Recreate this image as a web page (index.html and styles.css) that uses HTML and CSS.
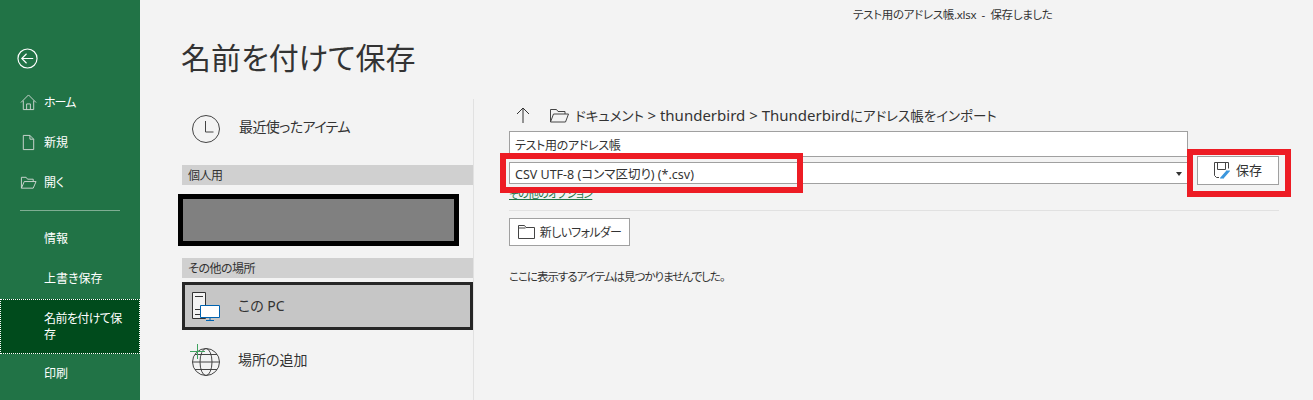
FILE: index.html
```html
<!doctype html>
<html lang="ja">
<head>
	<meta charset="UTF-8">
	<title>名前を付けて保存</title>
	<link rel="stylesheet" href="styles.css">
</head>
<body>
	<div class="side">
		<div class="back">
			<svg width="21" height="21" viewBox="0 0 22 22" fill="none" stroke="#fff" stroke-width="1.2"><circle cx="11" cy="11" r="10"/><path d="M17 11H5M10 6l-5 5 5 5"/></svg>
		</div>
		<div class="item">
			<svg class="ico" width="17" height="17" viewBox="0 0 18 18" fill="none" stroke="#d0d8d3" stroke-width="1"><path d="M1 9l8-8 8 8M3.500 7v9.500h11V7M7 16.500V10.500h4v6"/></svg>
			<span class="home">ホーム</span>
		</div>
		<div class="item">
			<svg class="ico" width="17" height="17" viewBox="0 0 18 18" fill="none" stroke="#d0d8d3" stroke-width="1"><path d="M3.500 1.500h7l4 4v11h-11zM10.500 1.500v4h4"/></svg>
			<span>新規</span>
		</div>
		<div class="item">
			<svg class="ico" width="17" height="17" viewBox="0 0 18 18" fill="none" stroke="#d0d8d3" stroke-width="1"><path d="M1.500 15V3.500h5l1.500 2h6V8M1.500 15l3-7h12.500l-3 7z"/></svg>
			<span>開く</span>
		</div>
		<div class="rule"></div>
		<div class="item"><span>情報</span></div>
		<div class="item"><span>上書き保存</span></div>
		<div class="item on"><span>名前を付けて保存</span></div>
		<div class="item"><span>印刷</span></div>
	</div>

	<div class="main">
		<div class="titlebar">テスト用のアドレス帳.xlsx&nbsp; -&nbsp; 保存しました</div>
		<h1>名前を付けて保存</h1>
		<div class="cols">
			<div class="places">
				<div class="place recent">
					<svg width="28" height="28" viewBox="0 0 28 28" fill="none" stroke="#444" stroke-width="1"><circle cx="14" cy="14" r="13.500"/><path d="M13.500 6v11h8"/></svg>
					<span>最近使ったアイテム</span>
				</div>
				<div class="head">個人用</div>
				<div class="mask"></div>
				<div class="head">その他の場所</div>
				<div class="place pc">
					<svg width="28" height="29" viewBox="0 0 28 29" fill="none">
						<path d="M.5 .5h13v26h-13z" fill="#f3f3f3" stroke="#333"/>
						<path d="M3 4.500h8M3 17.500h5M3 22.500h5" stroke="#333"/>
						<path d="M8.500 13.500h19v12h-19z" fill="#fff" stroke="#0063b1"/>
						<path d="M18 26v2M14 28.500h8" stroke="#0063b1"/>
					</svg>
					<span>この PC</span>
				</div>
				<div class="place add">
					<svg width="32" height="32" viewBox="0 0 32 32" fill="none" stroke="#444">
						<circle cx="17" cy="18" r="13.500"/>
						<ellipse cx="17" cy="18" rx="6" ry="13.500"/>
						<path d="M3.500 18h27M6 10.500h22M6 25.500h22"/>
						<path d="M8.500 0v15M1 7.500h15" stroke="#3fa35f"/>
					</svg>
					<span>場所の追加</span>
				</div>
			</div>

			<div class="pane">
				<div class="crumbs">
					<svg width="14" height="18" viewBox="0 0 14 18" fill="none" stroke="#333"><path d="M7 17V2M1 8l6-6 6 6"/></svg>
					<svg class="folder" width="19" height="15" viewBox="0 0 19 15" fill="none" stroke="#444"><path d="M.5 14V1.500h6l1.500 2h7V6M.5 14l3-8h15l-3 8z"/></svg>
					<span>ドキュメント <b>&gt; thunderbird &gt; Thunderbird</b>にアドレス帳をインポート</span>
				</div>
				<div class="fields">
					<div class="field name">テスト用のアドレス帳</div>
					<div class="filerow">
						<div class="field type">CSV UTF-8 (コンマ区切り) (*.csv)<i class="caret"></i></div>
						<div class="btn save">
							<svg width="17" height="17" viewBox="0 0 17 17" fill="none">
								<path d="M5 15.500H2.500l-2-2V.5h14v6M3.500 .5v7h8v-7" stroke="#444"/>
								<path d="M6.500 16.500l7-8M8.500 16.500l7-8" stroke="#3a96dd" stroke-width="1.500"/>
							</svg>
							保存
						</div>
						<div class="mark mark-save"></div>
					</div>
					<div class="mark mark-type"></div>
				</div>
				<a class="more">その他のオプション</a>
				<div class="sep"></div>
				<div class="btn newfolder">
					<svg width="17" height="14" viewBox="0 0 17 14" fill="none" stroke="#444"><path d="M.5 13.500V.5h6l1.500 2h8.500v11z"/><path d="M.5 3h7"/></svg>
					<span>新しいフォルダー</span>
				</div>
				<p class="empty">ここに表示するアイテムは見つかりませんでした。</p>
			</div>
		</div>
	</div>
</body>
</html>
```

FILE: styles.css
```css
*{margin:0;padding:0;box-sizing:border-box;}
html,body{height:400px;overflow:hidden;}
body{
	display:flex;
	background:#f3f3f3;
	color:#333;
	font-family:"Noto Sans","Noto Sans CJK JP",sans-serif;
	font-feature-settings:"palt";
}

/* left green bar */
.side{
	width:140px;
	flex:none;
	padding-top:36px;
	background:#217346;
	color:#fff;
	font-size:12px;
}
.back{height:47px;padding:12px 0 0 17px;}
.back svg{display:block;}
.item{
	display:flex;
	align-items:center;
	min-height:40px;
	padding:0 16px 0 44px;
	position:relative;
	line-height:16px;
}
.item .ico{position:absolute;left:20px;top:11px;}
.item .home{letter-spacing:-1px;}
.item.on{
	min-height:55px;
	background:#004b1c;
	outline:1px dotted #fff;
	outline-offset:-1px;
}
.item.on span{letter-spacing:-.6px;}
.rule{height:1px;margin:7px 20px 8px;background:#7fae93;}

.main{flex:1;min-width:0;}
.titlebar{
	height:30px;
	padding:7px 0 0 713px;
	font-size:11.500px;
	letter-spacing:-.3px;
	line-height:16px;
	white-space:nowrap;
}
h1{
	height:69px;
	padding:8px 0 0 41px;
	font-size:30px;
	font-weight:400;
	line-height:40px;
}
.cols{display:flex;}

/* place list */
.places{
	width:334px;
	height:301px;
	padding-left:42px;
	border-right:1px solid #e1e1e1;
}
.place{
	display:flex;
	align-items:center;
	font-size:14px;
}
.recent{height:66px;padding:0 0 6px 10px;gap:19px;}
.recent span{margin-bottom:6px;letter-spacing:-.6px;}
.head{
	height:20px;
	padding-left:6px;
	background:#d0d0d0;
	font-size:12px;
	letter-spacing:-.5px;
	line-height:21px;
}
.mask{
	width:281px;
	height:52px;
	margin:9px 0 12px -4px;
	background:#808080;
	border:5px solid #000;
}
.pc{
	height:48px;
	margin-top:4px;
	padding-left:7px;
	gap:18px;
	background:#c6c6c6;
	border:3px solid #262626;
}
.pc span{margin-bottom:3px;}
.add{height:60px;padding-left:7px;gap:17px;}
.add span{margin-bottom:2px;}

/* right pane */
.pane{flex:1;padding:0 34px 0 35px;}
.crumbs{
	display:flex;
	align-items:center;
	height:32px;
	font-size:13.500px;
	margin-left:7px;
	white-space:nowrap;
}
.crumbs b{font-weight:400;font-size:15px;}
.crumbs .folder{margin:0 6px 0 20px;}
.fields{position:relative;}
.field{
	background:#fff;
	border:1px solid #a0a0a0;
	font-size:12px;
	padding-left:5px;
	width:679px;
}
.name{height:26px;line-height:28px;letter-spacing:-.3px;}
.filerow{display:flex;align-items:flex-start;position:relative;margin-top:5px;}
.type{
	height:22px;
	font-size:12.500px;
	line-height:23px;
	position:relative;
}
.caret{
	position:absolute;
	right:5px;
	top:9px;
	border:3.500px solid transparent;
	border-top:4px solid #333;
	border-bottom:0;
}
.btn{
	display:flex;
	align-items:center;
	justify-content:center;
	background:#fff;
	border:1px solid #a0a0a0;
	font-size:12px;
}
.save{
	width:82px;
	height:29px;
	margin:-6px 0 0 9px;
	gap:5px;
	font-size:13px;
	line-height:19px;
}
.mark{position:absolute;border:6px solid #ed1c24;}
.mark-type{left:-9px;top:22px;width:303px;height:40px;}
.mark-save{left:678px;top:-13px;width:104px;height:48px;}
.more{
	display:block;
	height:18px;
	margin-top:-1px;
	color:#217346;
	font-size:11px;
	letter-spacing:-.8px;
	line-height:20px;
	text-decoration:underline;
}
.sep{height:1px;margin:8px 0 7px;background:#e1e1e1;}
.newfolder{width:121px;height:28px;gap:5px;}
.newfolder span{letter-spacing:-.7px;}
.empty{margin-top:23px;font-size:11.500px;letter-spacing:-1px;line-height:16px;}
```
